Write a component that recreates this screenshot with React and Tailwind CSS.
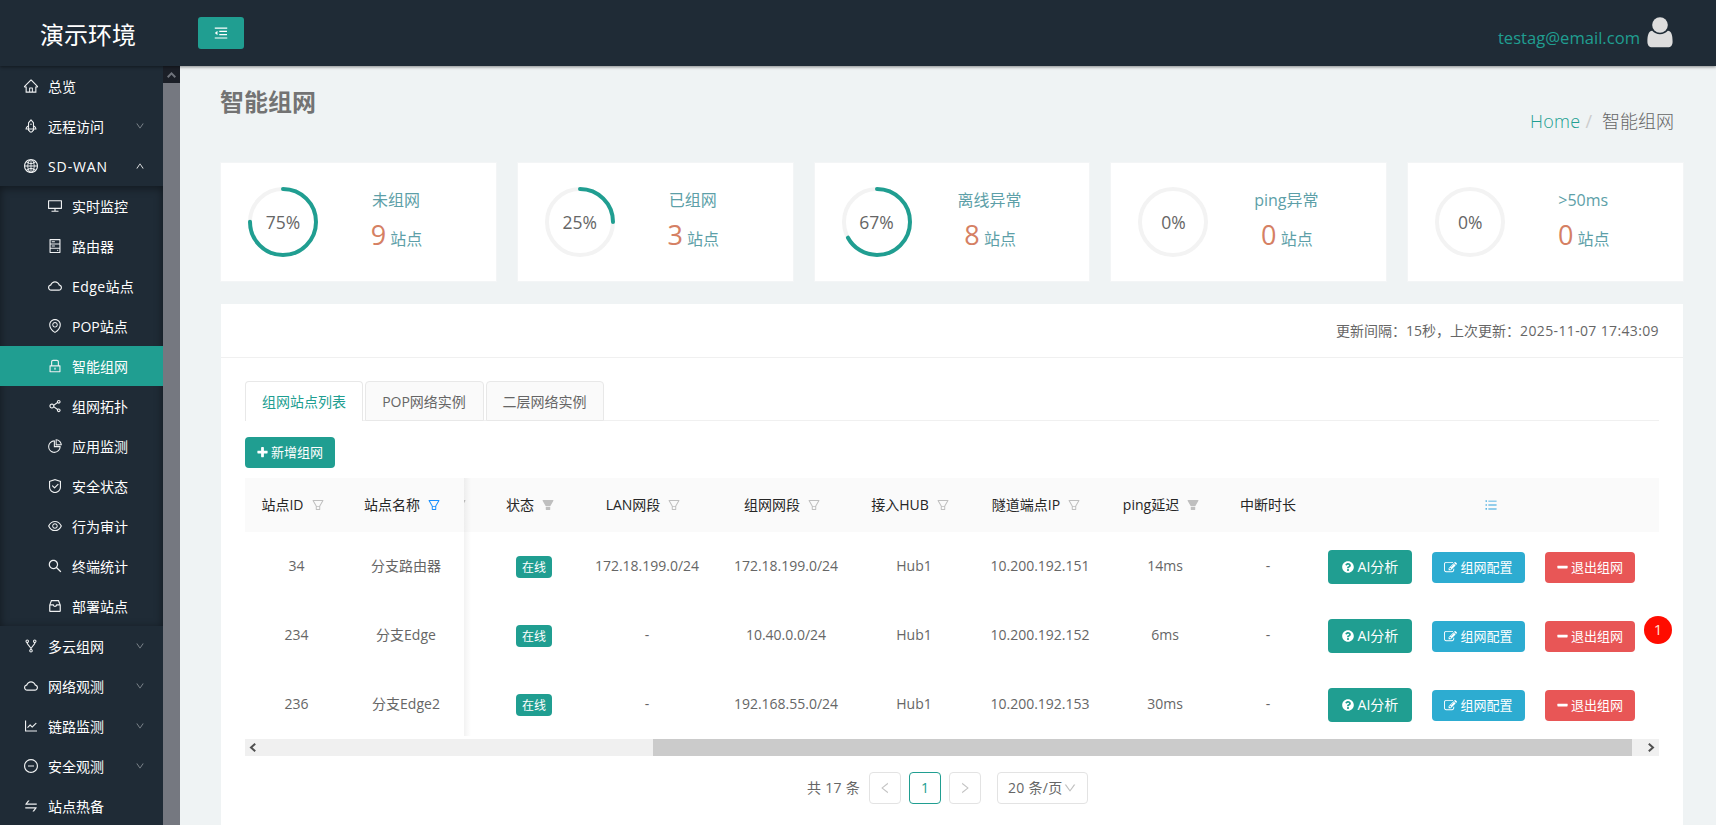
import React from "react";
import {
  AiOutlineHome, AiOutlineRocket, AiOutlineGlobal, AiOutlineDesktop, AiOutlineHdd, AiOutlineCloud,
  AiOutlineEnvironment, AiOutlineLock, AiOutlineShareAlt, AiOutlinePieChart, AiOutlineSafety, AiOutlineEye,
  AiOutlineSearch, AiOutlineInbox, AiOutlineFork, AiOutlineLineChart, AiOutlineMinusCircle, AiOutlineSwap,
  AiOutlineMenuFold, AiOutlineFilter, AiFillFilter, AiOutlineUnorderedList, AiOutlineDown, AiOutlineUp,
  AiOutlineLeft, AiOutlineRight,
} from "react-icons/ai";
import { FaQuestionCircle } from "react-icons/fa";

const MENU_TOP = [
  { icon: AiOutlineHome, label: "总览" },
  { icon: AiOutlineRocket, label: "远程访问", arrow: "down" },
  { icon: AiOutlineGlobal, label: "SD-WAN", arrow: "up", tracking: "tracking-[0.9px]" },
];
const MENU_SUB = [
  { icon: AiOutlineDesktop, label: "实时监控" },
  { icon: AiOutlineHdd, label: "路由器" },
  { icon: AiOutlineCloud, label: "Edge站点", tracking: "tracking-[0.4px]" },
  { icon: AiOutlineEnvironment, label: "POP站点" },
  { icon: AiOutlineLock, label: "智能组网", active: true },
  { icon: AiOutlineShareAlt, label: "组网拓扑" },
  { icon: AiOutlinePieChart, label: "应用监测" },
  { icon: AiOutlineSafety, label: "安全状态" },
  { icon: AiOutlineEye, label: "行为审计" },
  { icon: AiOutlineSearch, label: "终端统计" },
  { icon: AiOutlineInbox, label: "部署站点" },
];
const MENU_BOTTOM = [
  { icon: AiOutlineFork, label: "多云组网", arrow: "down" },
  { icon: AiOutlineCloud, label: "网络观测", arrow: "down" },
  { icon: AiOutlineLineChart, label: "链路监测", arrow: "down" },
  { icon: AiOutlineMinusCircle, label: "安全观测", arrow: "down" },
  { icon: AiOutlineSwap, label: "站点热备" },
];
const STATS = [
  { pct: 75, label: "未组网", n: 9 },
  { pct: 25, label: "已组网", n: 3 },
  { pct: 67, label: "离线异常", n: 8 },
  { pct: 0, label: "ping异常", n: 0 },
  { pct: 0, label: ">50ms", n: 0 },
];
const COLUMNS = "grid grid-cols-[103px_116px_26px_88px_138px_140px_116px_136px_114px_92px_345px]";
const ROWS = [
  { id: "34", name: "分支路由器", lan: "172.18.199.0/24", net: "172.18.199.0/24", ip: "10.200.192.151", ping: "14ms" },
  { id: "234", name: "分支Edge", lan: "-", net: "10.40.0.0/24", ip: "10.200.192.152", ping: "6ms" },
  { id: "236", name: "分支Edge2", lan: "-", net: "192.168.55.0/24", ip: "10.200.192.153", ping: "30ms" },
];

const PLUS = "M1600 736v192q0 40-28 68t-68 28h-416v416q0 40-28 68t-68 28h-192q-40 0-68-28t-28-68v-416h-416q-40 0-68-28t-28-68v-192q0-40 28-68t68-28h416v-416q0-40 28-68t68-28h192q40 0 68 28t28 68v416h416q40 0 68 28t28 68z";
const MINUS = "M1600 736v192q0 40-28 68t-68 28h-1216q-40 0-68-28t-28-68v-192q0-40 28-68t68-28h1216q40 0 68 28t28 68z";
const EDIT = "M888 1184l116-116-152-152-116 116v56h96v96h56zm440-720q-16-16-33 1l-350 350q-17 17-1 33t33-1l350-350q17-17 1-33zm80 594v190q0 119-84.5 203.5t-203.5 84.5h-832q-119 0-203.5-84.5t-84.5-203.5v-832q0-119 84.5-203.5t203.5-84.5h832q63 0 117 25 15 7 18 23 3 17-9 29l-49 49q-14 14-32 8-23-6-45-6h-832q-66 0-113 47t-47 113v832q0 66 47 113t113 47h832q66 0 113-47t47-113v-126q0-13 9-22l64-64q15-15 35-7t20 29zm-96-738l288 288-672 672h-288v-288zm444 132l-92 92-288-288 92-92q28-28 68-28t68 28l152 152q28 28 28 68t-28 68z";

function Glyph({ d, size, className = "" }) {
  return (
    <svg width={size} height={size} viewBox="0 0 1792 1792" fill="currentColor" className={"shrink-0 " + className}>
      <path d={d} />
    </svg>
  );
}

function MenuItem({ icon: Icon, label, arrow, active, sub, tracking = "" }) {
  return (
    <div className={"flex h-10 items-center pr-[18px] text-sm text-white " + (sub ? "pl-[47px] " : "pl-[23px] ") + (active ? "bg-[#209e91]" : "")}>
      <Icon size={16} className="shrink-0 text-[#eef0f1]" />
      <span className={"ml-[9px] flex-1 pt-0.5 leading-5 whitespace-nowrap " + tracking}>{label}</span>
      {arrow === "down" && <AiOutlineDown size={10} className="shrink-0 text-[#8b9299]" />}
      {arrow === "up" && <AiOutlineUp size={10} className="shrink-0" />}
    </div>
  );
}

function Ring({ pct }) {
  const len = 2 * Math.PI * 33;
  return (
    <div className="grid size-[70px] place-items-center">
      <svg width="70" height="70" viewBox="0 0 70 70" fill="none" className="col-start-1 row-start-1" strokeWidth="4">
        <circle cx="35" cy="35" r="33" stroke="#f3f3f3" />
        {pct > 0 && (
          <circle cx="35" cy="35" r="33" stroke="#209e91" strokeLinecap="round" strokeDasharray={`${(len * pct) / 100} ${len}`} transform="rotate(-90 35 35)" />
        )}
      </svg>
      <span className="col-start-1 row-start-1 text-[17.5px] leading-6">{pct}%</span>
    </div>
  );
}

function Head({ children, filter, blue, fill }) {
  const Icon = fill ? AiFillFilter : AiOutlineFilter;
  return (
    <div className="flex items-center justify-center whitespace-nowrap">
      <span>{children}</span>
      {filter && (
        <span className="flex w-7 justify-center">
          <Icon size={14} className={blue ? "text-[#1890ff]" : "text-[#bfbfbf]"} />
        </span>
      )}
    </div>
  );
}

function Cell({ children }) {
  return <div className="flex items-center justify-center pb-0.5 whitespace-nowrap">{children}</div>;
}

export default function App() {
  return (
    <div className="flex h-[825px] w-[1716px] flex-col overflow-hidden bg-[#eff3f4] text-sm text-[#666666] [font-family:'Open_Sans','Noto_Sans_CJK_SC',sans-serif]">
      <header className="z-10 flex h-[66px] shrink-0 items-center bg-[#1f2b36] shadow-[0_1px_3px_rgba(0,0,0,0.45)]">
        <div className="w-[198px] pt-[3px] pl-10 text-2xl text-white">演示环境</div>
        <div className="flex h-8 w-[46px] items-center justify-center rounded-[3px] bg-[#209e91] text-white">
          <AiOutlineMenuFold size={16} />
        </div>
        <div className="mr-[42px] ml-auto flex items-center">
          <span className="mr-[7px] pt-[10px] text-[16.6px] leading-6 text-[#209e91]">testag@email.com</span>
          <svg width="27" height="31" viewBox="0 0 27 31" className="mb-0.5 fill-[#dddddd]">
            <circle cx="13" cy="8" r="7.8" />
            <path d="M5.2 13.700a10.500 10.500 0 0 0 15.600 0C24.800 14 25.600 19 25.600 24.500C25.600 28.500 23.800 30.300 21 30.300H5.200C2.300 30.300 .4 28.500 .4 24.500C.4 19 1.300 14 5.200 13.700Z" />
          </svg>
        </div>
      </header>

      <div className="flex min-h-0 flex-1">
        <nav className="w-[163px] shrink-0 overflow-hidden bg-[#1f2b36]">
          {MENU_TOP.map((m) => <MenuItem key={m.label} {...m} />)}
          <div className="bg-[#1f2b36] shadow-[inset_0_2px_8px_rgba(0,0,0,0.45)]">
            {MENU_SUB.map((m) => <MenuItem key={m.label} sub {...m} />)}
          </div>
          {MENU_BOTTOM.map((m) => <MenuItem key={m.label} {...m} />)}
        </nav>
        <div className="flex w-[17px] shrink-0 flex-col bg-[#757880]">
          <div className="flex h-[17px] items-center justify-center bg-[#1b1f27] text-[#6f737b]">
            <svg width="9" height="6" viewBox="0 0 9 6" fill="none" stroke="currentColor" strokeWidth="2"><path d="M.7 5.200 4.500 1.400 8.300 5.200" /></svg>
          </div>
        </div>

        <main className="min-w-0 flex-1 pr-[33px] pl-[41px]">
          <div className="flex h-[97px] justify-between pr-[9px]">
            <h1 className="-ml-px pt-[18px] text-2xl leading-9 font-bold text-[#737373]">智能组网</h1>
            <div className="flex pt-[42px] text-lg leading-[26px]">
              <span className="font-light tracking-[0.3px] text-[#209e91]">Home</span>
              <span className="mr-[10px] ml-[5px] text-[#cccccc]">/</span>
              <span className="font-light">智能组网</span>
            </div>
          </div>

          <div className="grid grid-cols-5 gap-[22px]">
            {STATS.map((s) => (
              <div key={s.label} className="flex h-[118px] items-center bg-white pl-[27px] shadow-[0_0_0_1px_#f3f5f6]">
                <Ring pct={s.pct} />
                <div className="ml-[29px] w-[98px] text-center text-base text-[#5d9fa8]">
                  <div className="h-6 leading-6">{s.label}</div>
                  <div className="mt-[3px] mb-px h-10 pl-px leading-10 whitespace-nowrap"><span className="text-[27px] text-[#d58063]">{s.n}</span> 站点</div>
                </div>
              </div>
            ))}
          </div>

          <section className="mt-[23px] h-[540px] bg-white">
            <div className="flex h-[54px] items-center justify-end border-b border-[#f0f0f0] pr-6">
              <span>更新间隔：15秒，上次更新：</span>
              <span className="tracking-[0.36px]">2025-11-07 17:43:09</span>
            </div>
            <div className="px-6 pt-[23px]">
              <div className="flex h-10 gap-0.5 border-b border-[#f0f0f0]">
                <div className="h-10 w-[118px] rounded-t border border-b-0 border-[#e8e8e8] bg-white text-center leading-[40px] text-[#209e91]">组网站点列表</div>
                <div className="h-10 w-[119px] rounded-t border border-[#e8e8e8] bg-[#fafafa] pr-px text-center leading-[40px]">POP网络实例</div>
                <div className="h-10 w-[118px] rounded-t border border-[#e8e8e8] bg-[#fafafa] pr-px text-center leading-[40px]">二层网络实例</div>
              </div>
              <div className="mt-4 flex h-[31px] w-[90px] items-center justify-center rounded bg-[#209e91] pr-px text-[13px] text-white">
                <Glyph d={PLUS} size={13} className="mr-0.5" />新增组网
              </div>

              <div className="relative mt-2.5 h-[278px] w-[1414px] overflow-hidden">
                <div className={COLUMNS + " h-[54px] bg-[#fafafa] text-[#262626]"}>
                  <Head filter>站点ID</Head>
                  <Head filter blue>站点名称</Head>
                  <div className="flex items-center overflow-hidden"><AiOutlineFilter size={14} className="-ml-[11px] shrink-0 text-[#bfbfbf]" /></div>
                  <Head filter fill>状态</Head>
                  <Head filter>LAN网段</Head>
                  <Head filter>组网网段</Head>
                  <Head filter>接入HUB</Head>
                  <Head filter>隧道端点IP</Head>
                  <Head filter fill>ping延迟</Head>
                  <Head>中断时长</Head>
                  <div className="flex items-center justify-center pl-[9px]"><AiOutlineUnorderedList size={14} className="text-[#2b9fdb]" /></div>
                </div>
                {ROWS.map((r) => (
                  <div key={r.id} className={COLUMNS + " h-[69px]"}>
                    <Cell>{r.id}</Cell>
                    <Cell>{r.name}</Cell>
                    <div />
                    <div className="flex items-center justify-center">
                      <span className="mt-px h-[22px] w-9 rounded bg-[#209e91] text-center text-xs leading-[23px] text-white">在线</span>
                    </div>
                    <Cell>{r.lan}</Cell>
                    <Cell>{r.net}</Cell>
                    <Cell>Hub1</Cell>
                    <Cell>{r.ip}</Cell>
                    <Cell>{r.ping}</Cell>
                    <Cell>-</Cell>
                    <div className="flex items-center gap-5 pt-px pl-3.5 text-white">
                      <div className="flex h-[34px] w-[84px] items-center justify-center rounded bg-[#209e91]">
                        <FaQuestionCircle size={12} className="mr-1" />AI分析
                      </div>
                      <div className="mt-px flex h-[31px] w-[93px] items-center justify-center rounded bg-[#2dacd1] text-[13px]">
                        <Glyph d={EDIT} size={13} className="mr-[3px]" />组网配置
                      </div>
                      <div className="mt-px flex h-[31px] w-[90px] items-center justify-center rounded bg-[#e85656] pr-px text-[13px]">
                        <Glyph d={MINUS} size={13} className="mr-0.5" />退出组网
                      </div>
                    </div>
                  </div>
                ))}
                <div className="absolute top-0 left-[219px] h-[258px] w-[7px] bg-linear-to-r from-black/5 to-transparent" />
                <div className="flex h-[17px] items-center bg-[#f0f0f0] text-[#505050]">
                  <svg width="17" height="17" viewBox="0 0 17 17" fill="none" stroke="currentColor" strokeWidth="2" className="shrink-0"><path d="M10.200 4.700 6 8.500l4.200 3.800" /></svg>
                  <div className="ml-[391px] h-[17px] w-[979px] bg-[#cbcbcb]" />
                  <svg width="17" height="17" viewBox="0 0 17 17" fill="none" stroke="currentColor" strokeWidth="2" className="ml-auto shrink-0"><path d="m6.800 4.700 4.200 3.800-4.200 3.800" /></svg>
                </div>
              </div>

              <div className="mt-4 flex h-8 items-center pl-[562px]">
                <span className="w-[62px] tracking-[0.3px] whitespace-nowrap">共 17 条</span>
                <div className="grid size-8 place-items-center rounded border border-[#e3e3e3] text-[#c4c4c4]"><AiOutlineLeft size={14} /></div>
                <div className="ml-2 grid size-8 place-items-center rounded border border-[#209e91] text-[#209e91]">1</div>
                <div className="ml-2 grid size-8 place-items-center rounded border border-[#e3e3e3] text-[#c4c4c4]"><AiOutlineRight size={14} /></div>
                <div className="ml-4 flex h-8 w-[91px] items-center rounded border border-[#e3e3e3] pl-2.5 tracking-[0.3px] whitespace-nowrap">20 条/页<AiOutlineDown size={14} className="shrink-0 text-[#bfbfbf]" /></div>
              </div>
            </div>
          </section>
        </main>
      </div>

      <div className="absolute top-[616px] left-[1644px] z-20 grid size-7 place-items-center rounded-full bg-[#ff0c00] text-[15px] text-[#ffe3d0]">1</div>
    </div>
  );
}
